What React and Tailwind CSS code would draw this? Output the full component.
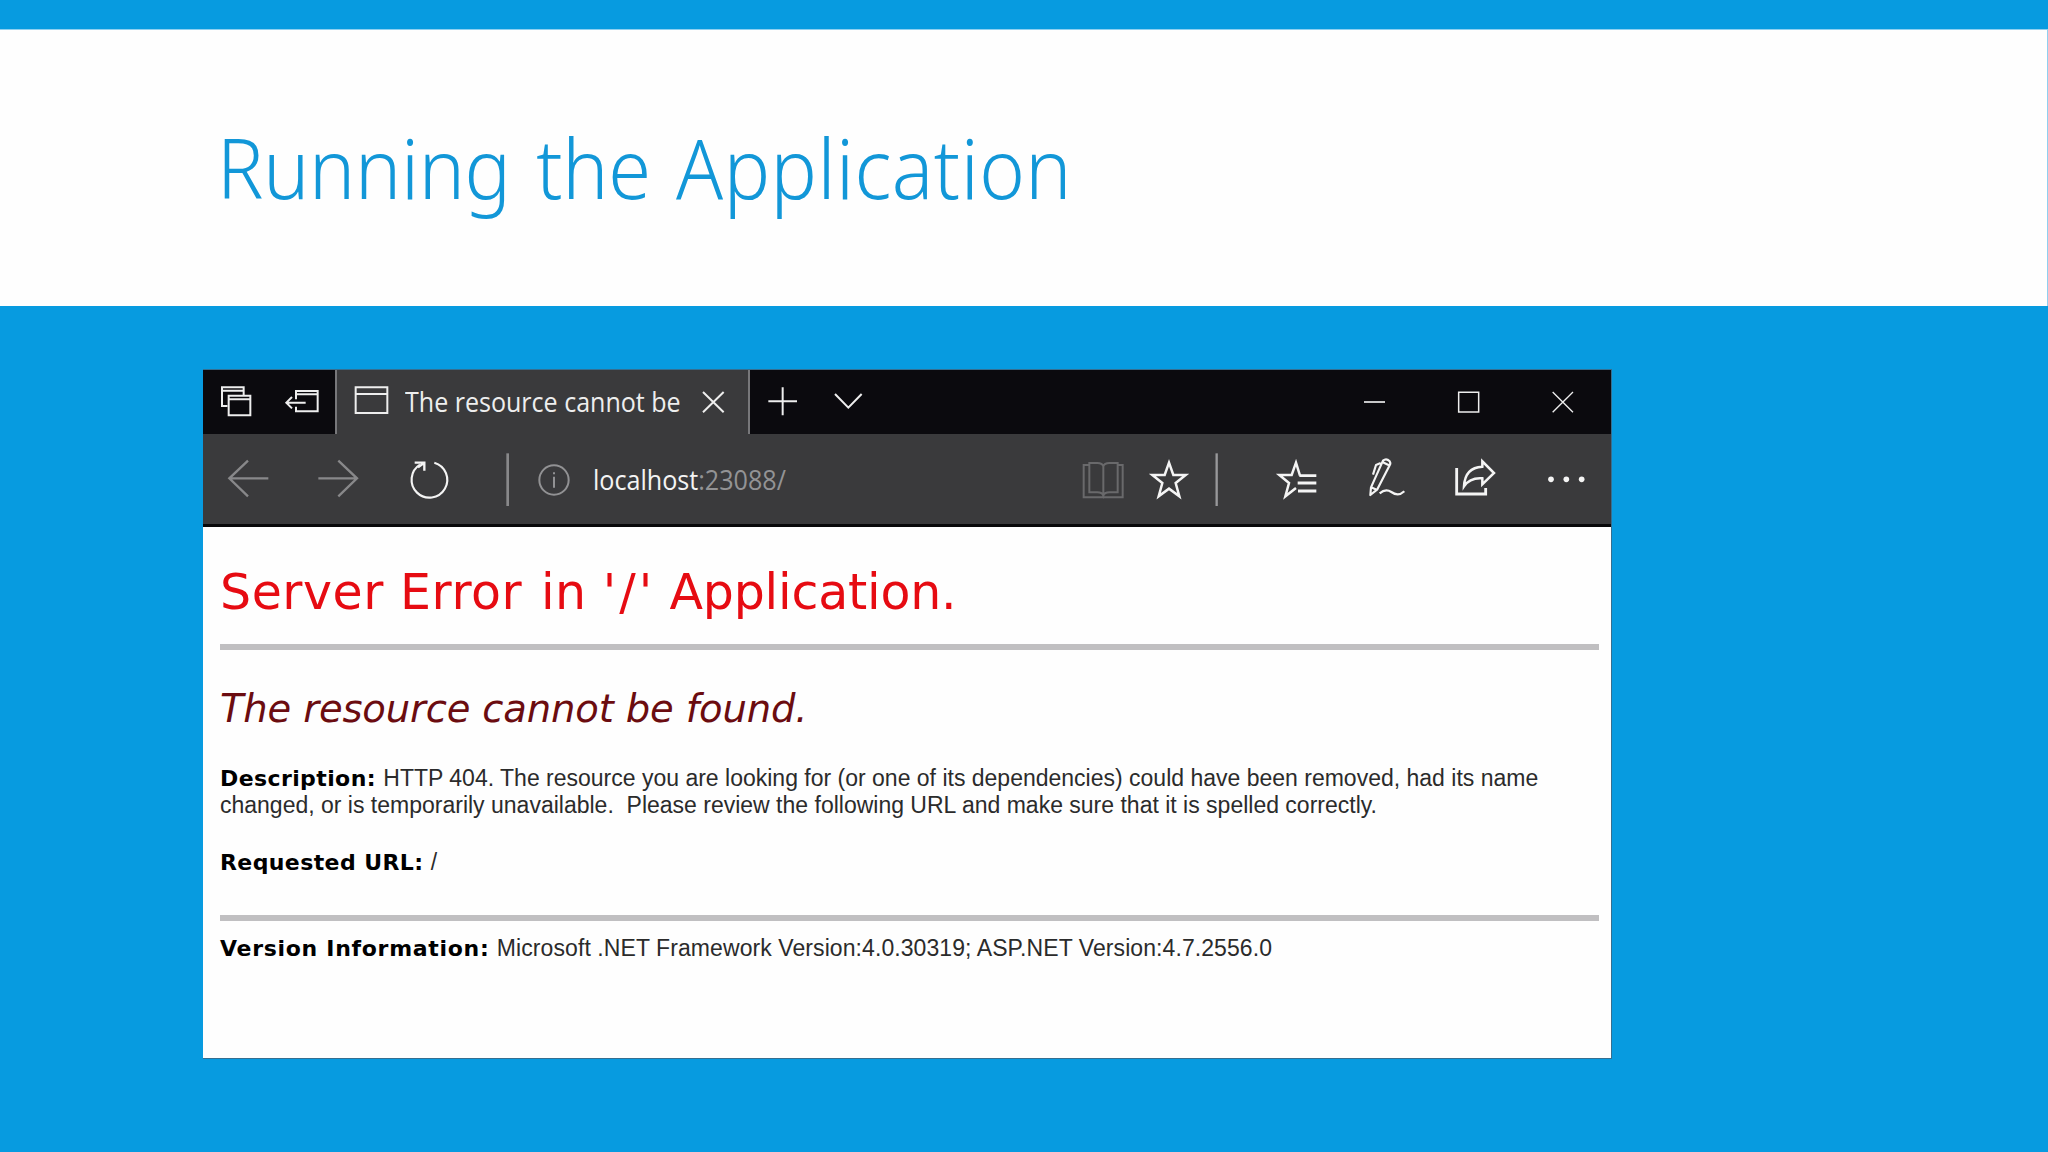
// Icons are drawn on a grid of three units to the pixel, as tall as their bar.
function BarIcon({ box, className, children }) {
  return (
    <svg viewBox={box} className={"shrink-0 " + className} fill="none" stroke="currentColor" strokeWidth="6">
      {children}
    </svg>
  );
}

function TitleBar() {
  return (
    <div className="flex h-16 bg-[#0b0a0e] text-[#eeeeee]">
      <BarIcon box="75 30 120 192" className="ml-3 h-16 w-10">
        <path d="M112 138H96V82H161V106M96 92H161M116 107H181V166H116ZM116 118H181" />
      </BarIcon>
      <BarIcon box="270 30 135 192" className="ml-[25px] h-16 w-[45px]">
        <path d="M318 118V93H383V154H318V140M318 103H383M347 128H290M306 111L289 128L306 145" />
      </BarIcon>
      <div className="ml-[10px] flex w-[415px] border-x-2 border-[#77777a] bg-[#3a3a3c]">
        <BarIcon box="480 30 135 192" className="ml-[13px] h-16 w-[45px]">
          <path d="M497 82H592V159H497ZM497 102H592" />
        </BarIcon>
        <div className="ml-[10px] w-[290px] whitespace-nowrap font-['Open_Sans',sans-serif] text-[26.5px] leading-[64px]">
          <span className="inline-block origin-left scale-x-[0.945]">The resource cannot be</span>
        </div>
        <BarIcon box="465 30 120 192" className="h-16 w-10">
          <path d="M489 96L551 157M551 96L489 157" />
        </BarIcon>
      </div>
      <BarIcon box="660 30 135 192" className="ml-[10px] h-16 w-[45px]">
        <path d="M685 124H771M728 82V166" />
      </BarIcon>
      <BarIcon box="870 30 120 192" className="ml-[25px] h-16 w-10">
        <path d="M885 102L925 143L965 102" />
      </BarIcon>
      <BarIcon box="45 30 120 192" className="ml-[485px] h-16 w-10">
        <path d="M72 126H135" strokeWidth="5" />
      </BarIcon>
      <BarIcon box="330 30 120 192" className="ml-[55px] h-16 w-10">
        <path d="M356 97H416V156H356Z" strokeWidth="4.500" />
      </BarIcon>
      <BarIcon box="609 30 120 192" className="ml-[53px] h-16 w-10">
        <path d="M638 96L699 157M699 96L638 157" strokeWidth="4" />
      </BarIcon>
    </div>
  );
}

function Toolbar() {
  return (
    <div className="flex h-[93px] border-b-3 border-[#08080a] bg-[#3a3a3c] text-[#f4f4f4]">
      <BarIcon box="90 222 165 270" className="ml-[17px] h-[90px] w-[55px] text-[#88888a]">
        <path d="M235 355H118M174 302L118 355L174 409" strokeWidth="7" />
      </BarIcon>
      <BarIcon box="360 222 165 270" className="ml-[35px] h-[90px] w-[55px] text-[#88888a]">
        <path d="M385 355H501M445 302L501 355L445 409" strokeWidth="7" />
      </BarIcon>
      <BarIcon box="639 222 165 270" className="ml-[38px] h-[90px] w-[55px]">
        <path d="M733 308A53.500 53.500 0 1 1 690 314" strokeWidth="6.500" />
        <path d="M674 308H703V332M684 322L702 309" strokeWidth="7" />
      </BarIcon>
      <BarIcon box="930 222 45 270" className="ml-[42px] h-[90px] w-[15px] text-[#88888a]">
        <path d="M953 280V438" strokeWidth="8" />
      </BarIcon>
      <BarIcon box="-15 222 120 270" className="ml-5 h-[90px] w-10 text-[#929294]">
        <circle cx="42" cy="360" r="44" />
        <path d="M42 350V383M42 337V343" />
      </BarIcon>
      <div className="ml-[18px] w-[482px] whitespace-nowrap font-['Open_Sans',sans-serif] text-[26.5px] leading-[93px]">
        <span className="inline-block origin-left scale-x-[0.948]">
          localhost<span className="text-[#939395]">:23088/</span>
        </span>
      </div>
      <BarIcon box="45 222 165 270" className="h-[90px] w-[55px] text-[#69696b]">
        <path d="M87 315H71V412H188V315H173M88 309H112Q127 309 130 319Q133 309 148 309H173V397H148Q133 397 130 407Q127 397 112 397H88ZM130 319V404" />
      </BarIcon>
      <BarIcon box="240 222 165 270" className="ml-[10px] h-[90px] w-[55px]">
        <path d="M327 308L340 345H377L347 369L358 409L327 386L296 409L307 369L277 345H314Z" strokeWidth="7.500" />
      </BarIcon>
      <BarIcon box="450 222 45 270" className="ml-[15px] h-[90px] w-[15px] text-[#98989a]">
        <path d="M470 280V438" strokeWidth="7" />
      </BarIcon>
      <BarIcon box="630 222 165 270" className="ml-[45px] h-[90px] w-[55px]">
        <path d="M720 347L708 308L695 345H658L687 369L676 409L708 384" strokeWidth="7.500" />
        <path d="M718 347H769M713 369H769M714 393H769" strokeWidth="8.500" />
      </BarIcon>
      <BarIcon box="66 222 150 270" className="ml-[37px] h-[90px] w-[50px]">
        <path d="M91 405L93 382L129 302Q139 293 149 304Q153 309 149 316L112 388ZM122 309L108 315L99 344M127 306L147 316M93 382L110 389M119 400Q137 384 154 396Q175 411 193 394" strokeWidth="6.500" strokeLinejoin="round" />
      </BarIcon>
      <BarIcon box="324 222 165 270" className="ml-9 h-[90px] w-[55px]">
        <path d="M350 324V402H437V384" strokeWidth="8.500" />
        <path d="M372 379Q375 322 427 320V304L462 339L427 373V355Q390 352 372 379Z" strokeWidth="7.500" />
      </BarIcon>
      <BarIcon box="600 222 150 270" className="ml-[37px] h-[90px] w-[50px]">
        <g fill="currentColor" stroke="none">
          <circle cx="633" cy="358" r="8.500" />
          <circle cx="679" cy="358" r="8.500" />
          <circle cx="725" cy="358" r="8.500" />
        </g>
      </BarIcon>
    </div>
  );
}

function Label({ className = "tracking-[0.4px]", children }) {
  return (
    <b className={"mr-px font-['DejaVu_Sans',sans-serif] text-[22px] leading-[20px] font-bold text-black " + className}>{children}</b>
  );
}

function ErrorPage() {
  return (
    <div className="h-[531px] bg-[#fefefe] pl-[17px] pr-3 font-['Liberation_Sans',sans-serif] text-[23px] leading-[27px] text-[#2b2b2b] whitespace-nowrap">
      <h1 className="h-[117px] pt-[36px] font-['DejaVu_Sans',sans-serif] text-[49px] leading-[60px] tracking-[0.55px] text-[#e60b12]">
        Server Error <span className="ml-[2.5px]">in</span> <span className="tracking-[3px]">'/'</span>{" "}
        <span className="-ml-[2px] tracking-[-0.2px]">Application.</span>
      </h1>
      <div className="h-[6px] bg-[#c0bfc1]" />
      <h2 className="h-[115px] pt-[34px] font-['DejaVu_Sans',sans-serif] text-[38.500px] italic leading-[50px] tracking-[-0.15px] text-[#6b0c10]">
        The resource cannot be found.
      </h2>
      <p>
        <Label>Description:</Label> HTTP 404. The resource you are looking for (or one of its dependencies) could have been removed, had its name
      </p>
      <p className="whitespace-pre">changed, or is temporarily unavailable.  Please review the following URL and make sure that it is spelled correctly.</p>
      <p className="mt-[30px]">
        <Label>Requested URL:</Label> /
      </p>
      <div className="mt-[39px] h-[6px] bg-[#c0bfc1]" />
      <p className="mt-[14px]">
        <Label className="tracking-[0.7px]">Version Information:</Label>{" "}
        <span className="tracking-[0.08px]">Microsoft .NET Framework Version:4.0.30319; ASP.NET Version:4.7.2556.0</span>
      </p>
    </div>
  );
}

export default function App() {
  return (
    <div className="h-[1152px] w-[2048px] overflow-hidden bg-[#079be0]">
      <div className="h-[29px]" />
      <header className="h-[277px] border-r border-t border-[#8fd0f0] bg-[#fefefe] pl-[217px] pt-[82px]">
        <span className="inline-block origin-left scale-x-[0.928] whitespace-nowrap font-['Noto_Sans',sans-serif] text-[83.5px] font-light leading-[110px] [word-spacing:6px] text-[#1297d8]">
          <span className="tracking-[-0.3px]">Running the </span>
          <span className="tracking-[0.5px]">Application</span>
        </span>
      </header>
      <main className="ml-[203px] mt-[63px] w-[1409px] border-b border-r border-t border-[#356f91]">
        <TitleBar />
        <Toolbar />
        <ErrorPage />
      </main>
    </div>
  );
}
